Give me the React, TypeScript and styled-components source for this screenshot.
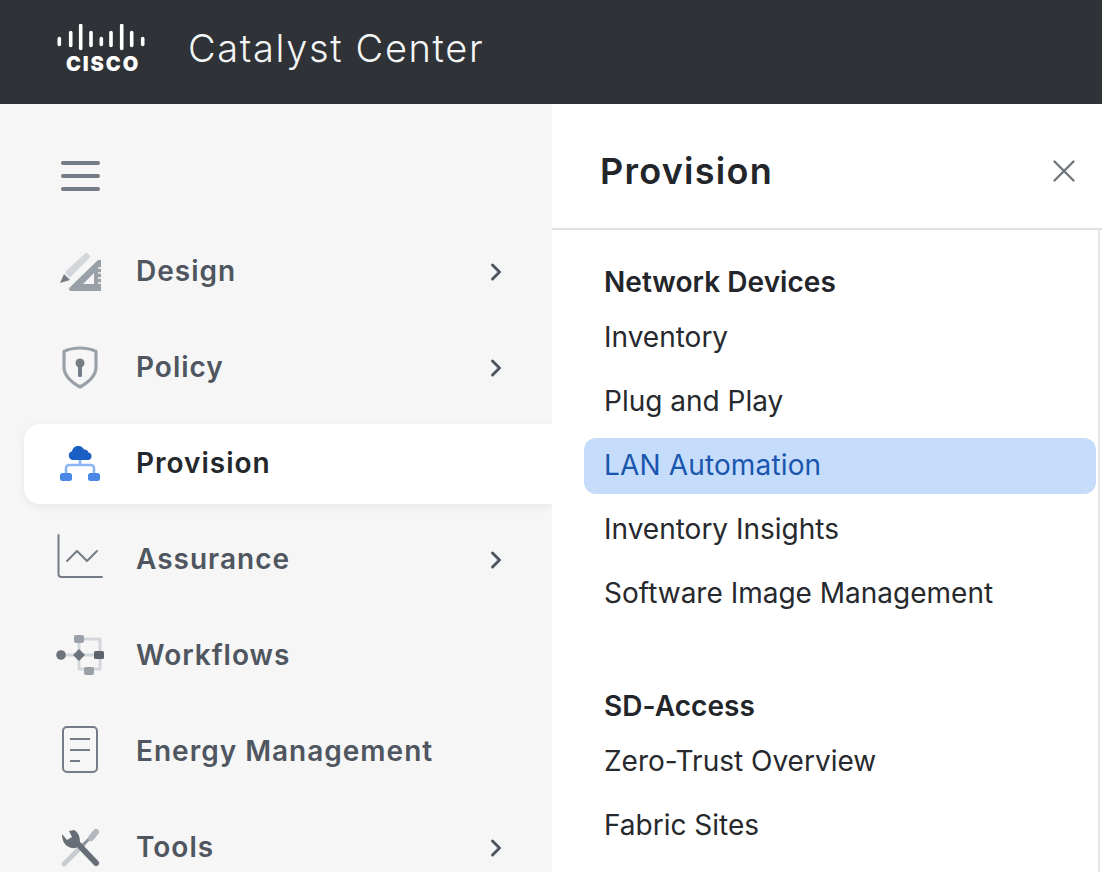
import React from 'react';
import styled, { createGlobalStyle } from 'styled-components';

const GlobalStyle = createGlobalStyle`
  html, body {
    margin: 0;
    padding: 0;
    height: 872px;
    overflow: hidden;
    background: #fff;
    font-family: Inter, "Liberation Sans", sans-serif;
  }
`;

const Page = styled.div`
  width: 1102px;
  height: 872px;
  overflow: hidden;
  display: flex;
  flex-direction: column;
`;

const Header = styled.header`
  flex: 0 0 104px;
  background: #2f3236;
  display: flex;
  align-items: center;
  padding-left: 56px;
  gap: 40px;
`;

const Product = styled.div`
  color: #f4f5f6;
  font-size: 38px;
  font-weight: 300;
  letter-spacing: 1.65px;
  line-height: 44px;
  margin-top: -8px;
`;

const LogoSvg = styled.svg`
  display: block;
  margin-top: -7px;
`;

const Body = styled.div`
  flex: 1;
  display: flex;
  min-height: 0;
`;

const SideNav = styled.nav`
  flex: 0 0 528px;
  background: #f6f6f6;
  padding: 48px 0 0 24px;
  display: flex;
  flex-direction: column;
  gap: 16px;
`;

const MenuButton = styled.div`
  flex: 0 0 48px;
  margin-bottom: 16px;
  padding-left: 37px;
  display: flex;
  flex-direction: column;
  justify-content: center;
  gap: 9px;
`;

const MenuBar = styled.span`
  width: 39px;
  height: 4px;
  border-radius: 2px;
  background: #767c85;
`;

const NavItem = styled.div<{ $active?: boolean }>`
  flex: 0 0 80px;
  box-sizing: border-box;
  display: flex;
  align-items: center;
  padding: 0 48px 0 32px;
  gap: 32px;
  border-radius: ${(p) => (p.$active ? '16px 0 0 16px' : '0')};
  background: ${(p) => (p.$active ? '#fff' : 'transparent')};
  box-shadow: ${(p) => (p.$active ? '0 2px 8px rgba(30, 35, 40, 0.07)' : 'none')};
`;

const NavIcon = styled.svg`
  flex: 0 0 48px;
  width: 48px;
  height: 48px;
  margin-bottom: 3px;
  overflow: visible;
`;

const NavLabel = styled.span<{ $active?: boolean }>`
  flex: 1;
  padding-bottom: 2px;
  font-size: 28px;
  font-weight: 600;
  letter-spacing: 1px;
  color: ${(p) => (p.$active ? '#24272b' : '#4f5660')};
`;

const Panel = styled.section`
  flex: 1;
  background: #fff;
  display: flex;
  flex-direction: column;
  min-width: 0;
  position: relative;
  z-index: 1;
`;

const PanelHead = styled.div`
  flex: 0 0 126px;
  box-sizing: border-box;
  border-bottom: 2px solid #dfe1e4;
  display: flex;
  align-items: center;
  justify-content: space-between;
  padding: 10px 26px 0 48px;
`;

const PanelTitle = styled.h1`
  margin: 0;
  font-size: 36px;
  font-weight: 600;
  letter-spacing: 1.25px;
  color: #22252a;
`;

const PanelBody = styled.div`
  flex: 1;
  margin-right: 2px;
  border-right: 2px solid #e6e8ea;
  padding: 27px 0 0 32px;
  display: flex;
  flex-direction: column;
`;

const SectionTitle = styled.h2`
  margin: 0;
  padding-left: 20px;
  height: 53px;
  line-height: 51px;
  font-size: 28px;
  font-weight: 600;
  letter-spacing: 0.05px;
  color: #22252a;
`;

const LinkRow = styled.div<{ $selected?: boolean }>`
  flex: 0 0 56px;
  width: 512px;
  box-sizing: border-box;
  margin-bottom: 8px;
  padding: 0 0 3px 20px;
  display: flex;
  align-items: center;
  font-size: 28px;
  font-weight: 400;
  letter-spacing: ${(p) => (p.$selected ? '0.15px' : '0')};
  border-radius: 12px;
  color: ${(p) => (p.$selected ? '#1a56ad' : '#26292d')};
  background: ${(p) => (p.$selected ? '#c5dcfb' : 'transparent')};
`;

const Group = styled.div`
  display: flex;
  flex-direction: column;
  margin-bottom: 51px;
`;

const logoBars: [number, number, number][] = [
  [3.3, 14.5, 20.5], [14.7, 8.5, 21.5], [24.7, 1.5, 24.5], [35, 8.5, 21.5], [45.3, 14.5, 20.5],
  [55, 8.5, 21.5], [65.7, 1.5, 24.5], [75.7, 8.5, 21.5], [86.7, 14.5, 20.5],
];

const Logo = () => (
  <LogoSvg width="92" height="50" viewBox="0 0 92 50">
    {logoBars.map(([x, y1, y2]) => (
      <line key={x} x1={x} x2={x} y1={y1} y2={y2} stroke="#fff" strokeWidth="3.6" strokeLinecap="round" />
    ))}
    <text x="10" y="46.500" fill="#fff" fontFamily="Inter, sans-serif" fontSize="20" fontWeight="900" letterSpacing="1.900">CISCO</text>
  </LogoSvg>
);

const Chevron = () => (
  <svg width="14" height="20" viewBox="0 0 14 20" fill="none">
    <path d="M2.5 3l7 7-7 7" stroke="#50565e" strokeWidth="3" strokeLinecap="round" strokeLinejoin="round" />
  </svg>
);

const DesignIcon = () => (
  <NavIcon viewBox="0 0 48 48" fill="none">
    <path d="M9 25L29 6.500a2 2 0 0 1 2.800 0l1.700 1.700a2 2 0 0 1 0 2.800L13.500 31z" fill="#d3d6da" />
    <path d="M4 36l4-9 6 6z" fill="#767c85" />
    <path fillRule="evenodd" d="M45 13v31H15a2 2 0 0 1-1.400-3.400L42 13zM38 26L27 37h11z" fill="#9aa0a8" />
    <path d="M42 21h3M42 26h3M42 31h3M42 36h3" stroke="#f6f6f6" strokeWidth="1.500" />
  </NavIcon>
);

const PolicyIcon = () => (
  <NavIcon viewBox="0 0 48 48" fill="none">
    <path d="M24 5c6 0 11 1 16 3.500V24c0 9-7 15-16 20-9-5-16-11-16-20V8.500C13 6 18 5 24 5z" stroke="#9aa0a8" strokeWidth="3.200" strokeLinejoin="round" />
    <circle cx="24" cy="20" r="4.500" fill="#767c85" />
    <rect x="22" y="20" width="4" height="14" rx="1.500" fill="#767c85" />
  </NavIcon>
);

const ProvisionIcon = () => (
  <NavIcon viewBox="0 0 48 48" fill="none">
    <path d="M10 34v-5a3 3 0 0 1 3-3h22a3 3 0 0 1 3 3v5M24 18v8" stroke="#8ab4f4" strokeWidth="2.600" />
    <path d="M17 21a4.500 4.500 0 0 1-1-8.800A6 6 0 0 1 22 7a6 6 0 0 1 6 3.500 4.500 4.500 0 0 1 4.500 3 3.800 3.800 0 0 1-.500 7.500z" fill="#1b5fc4" />
    <rect x="4" y="34" width="12" height="8" rx="2.500" fill="#4a88e8" />
    <rect x="32" y="34" width="12" height="8" rx="2.500" fill="#4a88e8" />
  </NavIcon>
);

const AssuranceIcon = () => (
  <NavIcon viewBox="0 0 48 48" fill="none">
    <path d="M2.500 0v39a3 3 0 0 0 3 3H46" stroke="#767c85" strokeWidth="2" strokeLinecap="round" />
    <path d="M11 26l10-10 10 10 10-10" stroke="#767c85" strokeWidth="2" strokeLinecap="round" strokeLinejoin="round" />
  </NavIcon>
);

const WorkflowsIcon = () => (
  <NavIcon viewBox="0 0 48 48" fill="none">
    <path d="M5 24h38M23 8h21v30H33M23 8v30h10" stroke="#d3d6da" strokeWidth="3" strokeLinejoin="round" />
    <rect x="18" y="4" width="10" height="8" rx="2" fill="#9aa0a8" />
    <rect x="28" y="36" width="10" height="8" rx="2" fill="#9aa0a8" />
    <circle cx="5" cy="24" r="4.800" fill="#6d737c" />
    <path d="M23 18l6 6-6 6-6-6z" fill="#6d737c" />
    <rect x="38" y="20" width="10" height="8" rx="1.500" fill="#5e646d" />
  </NavIcon>
);

const EnergyIcon = () => (
  <NavIcon viewBox="0 0 48 48" fill="none">
    <rect x="7" y="0" width="34" height="45" rx="4" stroke="#767c85" strokeWidth="2" />
    <path d="M14 12h20M14 23h20M14 34h10" stroke="#767c85" strokeWidth="2" />
  </NavIcon>
);

const ToolsIcon = () => (
  <NavIcon viewBox="0 0 48 48" fill="none">
    <path d="M8 41L27 22" stroke="#c9ccd1" strokeWidth="5" strokeLinecap="round" />
    <path d="M27 22l8-8" stroke="#8d939b" strokeWidth="3" />
    <path d="M35 15l5-6" stroke="#b4b8be" strokeWidth="6" strokeLinecap="round" />
    <path d="M21 20L40 40" stroke="#686e77" strokeWidth="6" strokeLinecap="round" />
    <path d="M6 11l5 6 5-3-3-6 5-1c4 2 6 6 6 13l-4 5c-7 1-14-3-14-14z" fill="#686e77" />
  </NavIcon>
);

const CloseIcon = () => (
  <svg width="24" height="24" viewBox="0 0 24 24" fill="none">
    <path d="M2.500 2.500l19 19M21.500 2.500l-19 19" stroke="#6f757e" strokeWidth="2.400" strokeLinecap="round" />
  </svg>
);

const navItems = [
  { label: 'Design', icon: <DesignIcon />, more: true },
  { label: 'Policy', icon: <PolicyIcon />, more: true },
  { label: 'Provision', icon: <ProvisionIcon />, active: true },
  { label: 'Assurance', icon: <AssuranceIcon />, more: true },
  { label: 'Workflows', icon: <WorkflowsIcon /> },
  { label: 'Energy Management', icon: <EnergyIcon /> },
  { label: 'Tools', icon: <ToolsIcon />, more: true },
];

const groups = [
  {
    title: 'Network Devices',
    links: ['Inventory', 'Plug and Play', 'LAN Automation', 'Inventory Insights', 'Software Image Management'],
  },
  {
    title: 'SD-Access',
    links: ['Zero-Trust Overview', 'Fabric Sites'],
  },
];

const App: React.FC = () => (
  <Page>
    <GlobalStyle />
    <Header>
      <Logo />
      <Product>Catalyst Center</Product>
    </Header>
    <Body>
      <SideNav>
        <MenuButton>
          <MenuBar />
          <MenuBar />
          <MenuBar />
        </MenuButton>
        {navItems.map((item) => (
          <NavItem key={item.label} $active={item.active}>
            {item.icon}
            <NavLabel $active={item.active}>{item.label}</NavLabel>
            {item.more && <Chevron />}
          </NavItem>
        ))}
      </SideNav>
      <Panel>
        <PanelHead>
          <PanelTitle>Provision</PanelTitle>
          <CloseIcon />
        </PanelHead>
        <PanelBody>
          {groups.map((group) => (
            <Group key={group.title}>
              <SectionTitle>{group.title}</SectionTitle>
              {group.links.map((link) => (
                <LinkRow key={link} $selected={link === 'LAN Automation'}>{link}</LinkRow>
              ))}
            </Group>
          ))}
        </PanelBody>
      </Panel>
    </Body>
  </Page>
);

export default App;
